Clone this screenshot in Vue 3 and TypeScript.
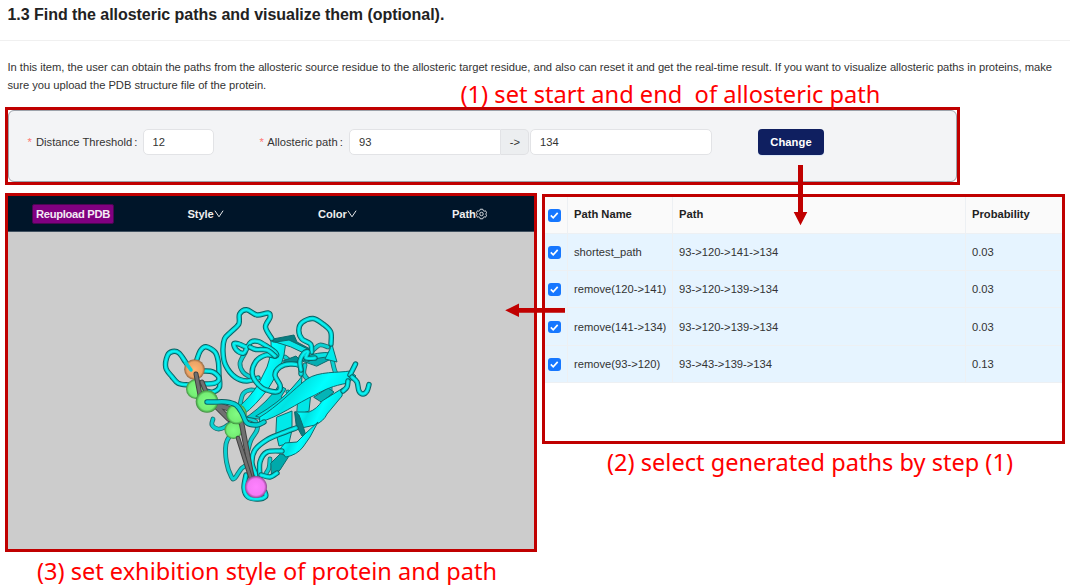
<script setup lang="ts">
import { ref } from 'vue'

type Point = [number, number]

interface PathRow {
  name: string
  path: string
  probability: string
  checked: boolean
}

const threshold = ref('12')
const source = ref('93')
const target = ref('134')

const rows = ref<PathRow[]>([
  { name: 'shortest_path', path: '93->120->141->134', probability: '0.03', checked: true },
  { name: 'remove(120->141)', path: '93->120->139->134', probability: '0.03', checked: true },
  { name: 'remove(141->134)', path: '93->120->139->134', probability: '0.03', checked: true },
  { name: 'remove(93->120)', path: '93->43->139->134', probability: '0.13', checked: true },
])

// Catmull-Rom spline through the backbone points
function spline(p: Point[]): string {
  let d = `M${p[0][0]} ${p[0][1]}`
  for (let i = 0; i < p.length - 1; i++) {
    const a = p[i - 1] ?? p[i]
    const b = p[i]
    const c = p[i + 1]
    const e = p[i + 2] ?? c
    d += `C${b[0] + (c[0] - a[0]) / 6} ${b[1] + (c[1] - a[1]) / 6} ${c[0] - (e[0] - b[0]) / 6} ${c[1] - (e[1] - b[1]) / 6} ${c[0]} ${c[1]}`
  }
  return d
}

const backTubes: Point[][] = [
  [[245, 353], [240, 363], [243, 372], [250, 377]],
  [[240, 405], [243, 394], [250, 390], [260, 391]],
  [[305, 365], [304, 374], [310, 381], [318, 384]],
  [[313, 350], [320, 345], [328, 347]],
  [[332, 359], [334, 368], [336, 374]],
  [[288, 392], [291, 400], [286, 406]],
  [[285, 357], [291, 361], [300, 360]],
  [[247, 418], [256, 422], [257, 430], [251, 440], [248, 450]],
  [[213, 419], [212, 425], [218, 429], [225, 427], [235, 420]],
  [[231, 434], [226, 444], [226.5, 462], [231.5, 477], [235, 478], [242, 468], [251, 463]],
  [[318, 397], [329, 395], [330, 387]],
  [[270, 459], [269, 468], [265, 475]],
]

const frontTubes: Point[][] = [
  [[271.7, 338.5], [265.5, 327], [270, 317.5], [268, 313], [257, 315], [246.7, 309.7], [239.6, 314], [238.8, 324], [230.5, 332.3], [224.5, 339], [223, 351.7], [225.5, 365], [235, 377], [246.7, 381], [258, 378]],
  [[191.7, 371], [185.5, 362], [179, 353], [172.5, 351.5], [167.5, 355.5], [165.8, 367.7], [172, 376.7], [178.3, 383.3], [188.3, 385]],
  [[196.7, 360], [200.5, 350.5], [206, 346.8], [215, 352], [218.3, 361.7], [219, 375], [219.5, 387], [213, 392], [206, 391]],
  [[204, 371], [213, 372], [219, 378], [215, 383], [203, 384]],
  [[246.7, 347.5], [238.3, 343.8], [233.8, 344], [236.5, 350], [243.3, 353.3], [246.7, 348.5], [251, 342], [258.3, 341.5], [268, 347], [275, 352], [276, 356], [266, 355], [255.5, 362], [252.5, 375], [261, 387], [272, 391.5], [279, 391], [280, 385], [275, 375], [280, 367], [290, 364], [300, 366], [301, 374]],
  [[250, 347], [256, 349.5], [267, 350], [275, 356]],
  [[311.7, 352], [310.5, 344], [302, 339], [298.8, 330.5], [302, 322.5], [313, 318.5], [323, 324], [330.7, 332], [331, 344]],
  [[301, 370], [300, 361], [304, 353], [308, 352], [306, 358], [315, 358]],
  [[350, 375], [355.5, 364]],
  [[352, 377], [357, 382], [359, 391], [363, 394], [367, 391], [369, 384.5]],
  [[343, 391], [347, 387], [348, 381]],
  [[256.7, 476], [252, 463], [255, 450], [266.7, 440], [280, 434], [296, 428]],
  [[260, 477], [260, 462], [267, 452], [282, 451]],
  [[261, 475], [270, 477], [277, 473]],
  [[246, 475], [244, 488], [248, 497], [258, 499], [265.5, 496.5], [265, 492]],
]

const topTube: Point[] = [[207, 402], [214, 402], [226, 402], [236, 405], [242, 413], [247, 423], [257, 425], [264, 422]]

const backRibbons = [
  { d: 'M277 417L292 411 292 430 289 443 279 446 276 433Z', fill: '#00eaea' },
  { d: 'M298 400L311 392 309 411 297 415Z', fill: '#00e6e6' },
  { d: 'M272 477L280 470 289 456 280 454 271 463Z', fill: '#00a9ab' },
  { d: 'M314 397L328 388 334 392 322 402Z', fill: '#05b4b6' },
  { d: 'M283 361L296 356 300 360 288 366Z', fill: '#048f93' },
]

const ribbons = [
  { d: 'M271 341L286 341Q285 355 280 369L268 389Q255 406 244 414L234 411Q250 398 259 383L267 367Q272 353 271 341Z', fill: 'url(#sheet)' },
  { d: 'M247 417Q269 401 279 385L286 389 281 397 286 401 260 419Z', fill: '#00d0d1' },
  { d: 'M256 416Q280 402 292 388L299 380 302 376 301 391 287 404 267 419Z', fill: '#00e2e3' },
  { d: 'M273 339L294 335 297 342 312 350 309 354 289 344 273 342Z', fill: '#087d81' },
  { d: 'M276 342L289 340 312 351 308 355 291 347Z', fill: '#08e6e7' },
  { d: 'M303 361L312 355 332 353 331 359 317 366Z', fill: '#05aeb2' },
  { d: 'M303 358Q318 351 332 353L331 357Q317 357 307 362Z', fill: '#08e2e3' },
  { d: 'M331 338L333 348 337 362 325 359 330 349Z', fill: '#00eaea' },
  { d: 'M260 417C277 407 294 389 307 379C319 371 338 373 350 371L356 376 348 383C332 386 326 389 315 395C297 403 279 417 260 422Z', fill: 'url(#sheet)' },
  { d: 'M295 412L309 412Q317 409 322 401L343 388 342 396 327 414Q324 421 315 425L297 429Z', fill: 'url(#sheet)' },
  { d: 'M295 412L297 427 302 436 307 439 303 426 299 415Z', fill: '#087d81' },
  { d: 'M280 449L285 443 297 442 306 433 318 422 310 437 303 447Q297 455 286 457Z', fill: 'url(#sheet)' },
]

const rods = [
  { d: 'M196 374L200 395M202 382L206 392', w: 5 },
  { d: 'M215 405L229 419M215 404L230 409', w: 6 },
  { d: 'M241 420L252 478', w: 5.5 },
  { d: 'M238 438L251 479', w: 4.5 },
]
</script>

<template>
  <main class="page">
    <header class="head"><h1>1.3 Find the allosteric paths and visualize them (optional).</h1></header>
    <p class="intro">
      <span>In this item, the user can obtain the paths from the allosteric source residue to the allosteric target residue, and also can reset it and get the real-time result. If you want to visualize allosteric paths in proteins, make</span>
      <span>sure you upload the PDB structure file of the protein.</span>
    </p>

    <section class="frame form-frame">
      <form class="form" @submit.prevent>
        <label class="lab lab-a"><i>*</i> Distance Threshold<b>:</b></label>
        <input v-model="threshold" class="inp inp-a" />
        <label class="lab lab-b"><i>*</i> Allosteric path<b>:</b></label>
        <input v-model="source" class="inp inp-b" />
        <span class="addon">-&gt;</span>
        <input v-model="target" class="inp inp-c" />
        <button class="change" type="submit">Change</button>
      </form>
    </section>

    <div class="columns">
      <section class="frame viewer">
        <nav class="bar">
          <button class="upload" type="button">Reupload PDB</button>
          <span class="menu m-style">Style<svg width="10" height="10" viewBox="0 0 10 10"><path d="M.9 1.7 5 7.8 9.1 1.7" /></svg></span>
          <span class="menu m-color">Color<svg width="10" height="10" viewBox="0 0 10 10"><path d="M.9 1.7 5 7.8 9.1 1.7" /></svg></span>
          <span class="menu m-path">Path<svg width="11" height="12" viewBox="0 0 12 12"><path d="M4.6.8h2.8l.5 1.5 1 .6 1.5-.4 1.2 2.2L10.5 6l1.1 1.3-1.2 2.2-1.500-.4-1 .6-.5 1.500H4.600l-.5-1.500-1-.6-1.500.4L.4 7.300 1.500 6 .4 4.700l1.200-2.200 1.500.4 1-.6z" /><circle cx="6" cy="6" r="1.9" /></svg></span>
        </nav>
        <svg class="protein" width="526" height="317" viewBox="8 232 526 317">
          <defs>
            <linearGradient id="sheet" x1="0" y1="0" x2="1" y2="0.4">
              <stop offset="0" stop-color="#00d4d4" />
              <stop offset=".3" stop-color="#00fafa" />
              <stop offset=".45" stop-color="#00e2e2" />
              <stop offset=".65" stop-color="#00ffff" />
              <stop offset="1" stop-color="#00e0e0" />
            </linearGradient>
            <radialGradient id="green"><stop offset="0" stop-color="#82fb82" /><stop offset=".75" stop-color="#74ee74" /><stop offset="1" stop-color="#3d883d" /></radialGradient>
            <radialGradient id="orange"><stop offset="0" stop-color="#ffb774" /><stop offset=".75" stop-color="#eba365" /><stop offset="1" stop-color="#8c643f" /></radialGradient>
            <radialGradient id="magenta"><stop offset="0" stop-color="#ff82ff" /><stop offset=".75" stop-color="#f57af5" /><stop offset="1" stop-color="#914691" /></radialGradient>
          </defs>
          <g v-for="(t, i) in backTubes" :key="'b' + i" class="tube back">
            <path class="edge" :d="spline(t)" /><path class="core" :d="spline(t)" />
          </g>
          <path v-for="(r, i) in backRibbons" :key="'s' + i" class="ribbon" :d="r.d" :fill="r.fill" />
          <path v-for="(r, i) in ribbons" :key="'r' + i" class="ribbon" :d="r.d" :fill="r.fill" />
          <g v-for="(t, i) in frontTubes" :key="'f' + i" class="tube">
            <path class="edge" :d="spline(t)" /><path class="core" :d="spline(t)" /><path class="shine" :d="spline(t)" />
          </g>
          <circle cx="233.5" cy="430" r="9" fill="url(#green)" />
          <circle cx="194.5" cy="369.5" r="10.3" fill="url(#orange)" />
          <circle cx="196" cy="389" r="10" fill="url(#green)" />
          <g v-for="(r, i) in rods" :key="'g' + i">
            <path :d="r.d" :stroke-width="r.w" stroke="#414141" />
            <path :d="r.d" :stroke-width="r.w - 2" stroke="#707070" />
          </g>
          <circle cx="207" cy="401.5" r="11.3" fill="url(#green)" />
          <circle cx="236.5" cy="414" r="10.3" fill="url(#green)" />
          <circle cx="256" cy="487" r="11" fill="url(#magenta)" />
          <g class="tube">
            <path class="edge" :d="spline(topTube)" /><path class="core" :d="spline(topTube)" />
          </g>
          <path class="core" d="M186 363L191 370" />
        </svg>
      </section>

      <section class="frame results">
        <table>
          <colgroup><col class="c1" /><col class="c2" /><col class="c3" /><col class="c4" /></colgroup>
          <thead>
            <tr>
              <th><span class="check"><svg viewBox="0 0 12 12"><path d="M2.7 6.2 5 8.5 9.3 3.7" /></svg></span></th>
              <th>Path Name</th><th>Path</th><th>Probability</th>
            </tr>
          </thead>
          <tbody>
            <tr v-for="row in rows" :key="row.name">
              <td><span class="check" @click="row.checked = !row.checked"><svg v-if="row.checked" viewBox="0 0 12 12"><path d="M2.7 6.2 5 8.5 9.3 3.7" /></svg></span></td>
              <td>{{ row.name }}</td><td>{{ row.path }}</td><td>{{ row.probability }}</td>
            </tr>
          </tbody>
        </table>
      </section>
    </div>

    <svg class="notes" width="1070" height="585" viewBox="0 0 1070 585">
      <path d="M798 165h5v47h4.300L800.500 225.300 793.700 212h4.300z" />
      <path d="M565 308v4.700h-46v4.300l-13.800-6.700L519 303.500v4.500z" />
      <text x="460.5" y="103" textLength="420" lengthAdjust="spacingAndGlyphs">(1) set start and end&#160; of allosteric path</text>
      <text x="607" y="470.5" textLength="406" lengthAdjust="spacingAndGlyphs">(2) select generated paths by step (1)</text>
      <text x="37" y="579.5" textLength="460" lengthAdjust="spacingAndGlyphs">(3) set exhibition style of protein and path</text>
    </svg>
  </main>
</template>

<style>
body { margin: 0; background: #fff; }
</style>

<style scoped>
.page { position: relative; width: 1070px; height: 585px; overflow: hidden; background: #fff; color: #333; font: 11.2px/17.7px "Liberation Sans", Arial, sans-serif; }
.page * { box-sizing: border-box; }
.head { height: 41px; padding: 5px 7.5px 0; border-bottom: 1px solid #f0f0f0; }
h1 { margin: 0; font-size: 16px; line-height: 19px; color: #222; white-space: nowrap; letter-spacing: -.04px; }
.intro { margin: 0; padding: 18px 7.5px 0; height: 66px; white-space: nowrap; letter-spacing: -.023px; }
.intro span { display: block; width: max-content; }
.frame { border: 3px solid #c00000; }
.form-frame { width: 955px; height: 78px; margin-left: 5px; background: #fff; }
.form { display: flex; align-items: flex-start; height: 72px; padding: 18px 0 0 18.5px; border: 1px solid #9da3ab; border-radius: 6px; background: #f3f4f6; }
.lab { flex: none; line-height: 27px; white-space: nowrap; }
.lab i { color: #ff7875; font-style: normal; margin-right: 1px; }
.lab b { font-weight: 400; margin-left: 2px; }
.lab-a { width: 115px; }
.lab-b { width: 89.5px; margin-left: 45.5px; }
.inp { flex: none; height: 26px; padding: 0 9px; border: 1px solid #e2e3e6; border-radius: 5px; background: #fff; color: #333; font: inherit; outline: 0; }
.inp-a { width: 71.5px; }
.inp-b { width: 152px; border-radius: 5px 0 0 5px; }
.inp-c { width: 182px; margin-left: 1px; }
.addon { flex: none; width: 28px; height: 26px; padding-left: 1px; border: 1px solid #e0e1e4; border-left: 0; border-radius: 0 5px 5px 0; background: #eceef0; line-height: 25px; text-align: center; }
.change { width: 66px; height: 26px; margin-left: 46px; padding: 0; border: 0; border-radius: 4px; background: #0f1f60; color: #fff; font: bold 11.2px/26px "Liberation Sans", Arial, sans-serif; letter-spacing: .05px; box-shadow: 0 1px 1px #dbe7f8; }
.columns { display: flex; gap: 5px; align-items: flex-start; padding: 8px 0 0 5px; }
.viewer { width: 532px; height: 359px; background: #ccc; }
.bar { display: flex; align-items: center; height: 36px; background: #001529; color: #eee; border-bottom: 1px solid #40505f; font-weight: 700; }
.upload { flex: none; width: 82px; height: 20px; margin-left: 24px; padding: 0; border: 1px solid #4a0652; border-radius: 2px; background: #800080; color: #f4eaf4; font: bold 11.2px/18px "Liberation Sans", Arial, sans-serif; letter-spacing: -.3px; white-space: nowrap; }
.menu { flex: none; display: flex; align-items: center; padding-top: 2px; letter-spacing: -.1px; }
.menu svg { flex: none; margin-top: -1px; fill: none; stroke: #e6e8ea; stroke-width: 1; }
.m-style { width: 130.5px; margin-left: 73.5px; }
.m-color { width: 134px; }
.protein { display: block; fill: none; stroke-linecap: round; stroke-linejoin: round; }
.tube path { fill: none; }
.edge { stroke: #0a6264; stroke-width: 5.4; }
.core { stroke: #04d4d5; stroke-width: 3.5; }
.shine { stroke: #0cf4f4; stroke-width: 1.5; }
.back .edge { stroke: #1f7072; stroke-width: 4.8; }
.back .core { stroke: #0ad2d3; stroke-width: 3; }
.ribbon { stroke: #0c6c6f; stroke-width: 1; }
.results { width: 523px; height: 250px; margin-top: 1px; background: #fff; }
table { width: 517px; border-collapse: separate; border-spacing: 0; table-layout: fixed; }
.c1 { width: 23px; }
.c2 { width: 105px; }
.c3 { width: 293px; }
.c4 { width: 96px; }
th, td { padding: 2px 0 0 6px; height: 37.3px; border-bottom: 1px solid #edf0f3; border-right: 1px solid #edf0f3; text-align: left; white-space: nowrap; background: #e6f4ff; }
th { height: 36.8px; padding-top: 0; background: #fafafa; color: #222; }
th:last-child, td:last-child { border-right: 0; }
th:first-child, td:first-child { padding: 1px 0 0 3px; }
.check { display: block; width: 12.5px; height: 12.5px; border-radius: 3px; background: #1677ff; }
.check svg { display: block; fill: none; stroke: #fff; stroke-width: 1.6; }
.notes { position: absolute; left: 0; top: 0; pointer-events: none; fill: #c00000; }
.notes text { fill: #f00; font: 23px "Noto Sans", "Open Sans", sans-serif; }
</style>
